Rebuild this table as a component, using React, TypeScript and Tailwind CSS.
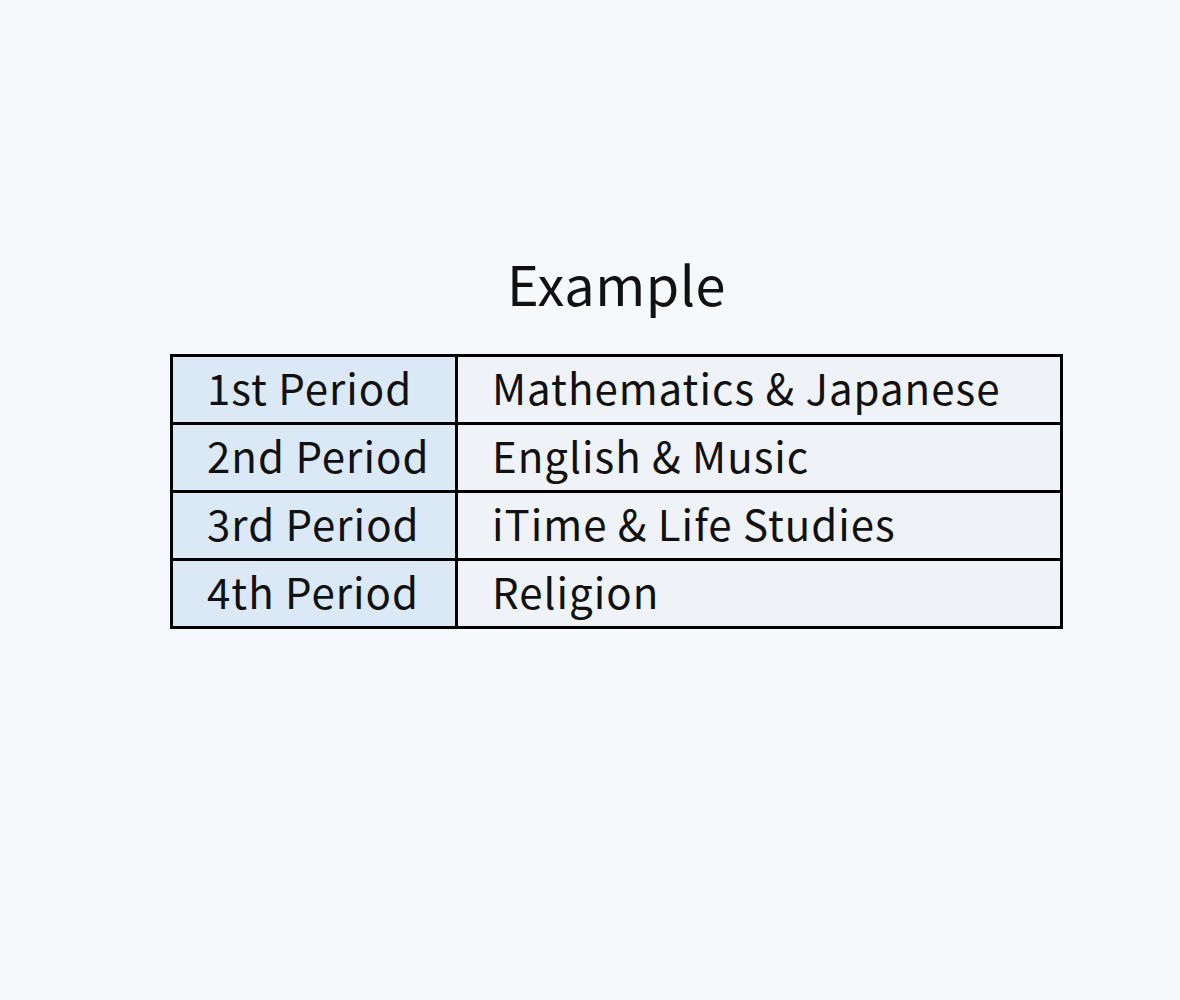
const rows = [
  { period: '1st Period', subject: 'Mathematics & Japanese' },
  { period: '2nd Period', subject: 'English & Music' },
  { period: '3rd Period', subject: 'iTime & Life Studies' },
  { period: '4th Period', subject: 'Religion' },
];

export default function App() {
  return (
    <div className="min-h-[1000px] w-full bg-[#f5f9fc] font-['Noto_Sans_CJK_JP',sans-serif] text-[#111]">
      <div className="ml-[170px] w-[893px] pt-[245px]">
        <h1 className="text-center text-[54px] leading-[76px] font-normal tracking-[0.5px]">Example</h1>
        <table className="mt-[33px] w-full table-fixed border-collapse border-[3px] border-black">
          <tbody>
            {rows.map((row) => (
              <tr key={row.period} className="h-[68px]">
                <td className="w-[285px] whitespace-nowrap border-[3px] border-black bg-[#dbe9f7] pl-[34px] pb-[6px] text-[42px] leading-none tracking-[1px]">
                  {row.period}
                </td>
                <td className="whitespace-nowrap border-[3px] border-black bg-[#eff3f8] pl-[34px] pb-[6px] text-[42px] leading-none tracking-[1px]">
                  {row.subject}
                </td>
              </tr>
            ))}
          </tbody>
        </table>
      </div>
    </div>
  );
}
